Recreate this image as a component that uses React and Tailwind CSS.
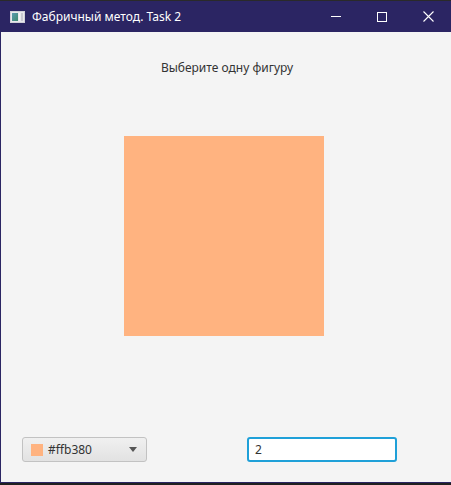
import React, { useState } from 'react';

const App = () => {
  const [value, setValue] = useState('2');

  return (
    <div className="w-[451px] h-[485px] bg-[#202020] flex flex-col overflow-hidden" style={{ fontFamily: '"Noto Sans", "Open Sans", sans-serif' }}>
      <div className="h-px bg-[#2a2a2a]" />
      {/* Title bar */}
      <div className="h-[31px] bg-[#2b2563] flex items-center text-white">
        <div className="ml-[10px] w-[15px] h-[12px] bg-[#e8e8ec] border border-[#d0d0d8] flex p-[1px] gap-[1px]">
          <div className="w-[6px] bg-gradient-to-br from-[#5a9ab0] to-[#3f8a6e]" />
          <div className="flex-1 bg-[#f4f4f6]" />
          <div className="w-[2px] bg-[#c8c8d0]" />
        </div>
        <span className="ml-[7px] text-[12px] leading-none">Фабричный метод. Task 2</span>
        <div className="ml-auto flex items-center h-full">
          <div className="w-[46px] h-full flex items-center justify-center">
            <div className="w-[10px] h-px bg-white" />
          </div>
          <div className="w-[46px] h-full flex items-center justify-center">
            <div className="w-[10px] h-[10px] border border-white" />
          </div>
          <div className="w-[46px] h-full flex items-center justify-center">
            <svg width="11" height="11" viewBox="0 0 11 11">
              <path d="M0.5 0.5L10.5 10.5M10.5 0.5L0.5 10.5" stroke="white" strokeWidth="1.1" />
            </svg>
          </div>
        </div>
      </div>
      {/* Content */}
      <div className="flex-1 flex border-l border-[#2b2563] overflow-hidden">
        <div className="flex-1 bg-[#f4f4f4] flex flex-col">
          <p className="mt-[28px] ml-[2px] text-center text-[12px] text-[#333333] leading-[16px]">Выберите одну фигуру</p>
          <div className="mt-[60px] ml-[123px] w-[200px] h-[200px] bg-[#ffb380]" />
          <div className="mt-[101px] flex items-center">
            <button className="ml-[21px] w-[125px] h-[25px] rounded-[3px] border border-[#c2c2c2] bg-gradient-to-b from-[#f0f0f0] to-[#e2e2e2] flex items-center px-[8px]">
              <span className="w-[12px] h-[12px] bg-[#ffb380]" />
              <span className="ml-[5px] text-[12px] text-[#333333]">#ffb380</span>
              <svg className="ml-auto mr-[1px]" width="8" height="5" viewBox="0 0 8 5">
                <path d="M0 0H8L4 5Z" fill="#555555" />
              </svg>
            </button>
            <input
              value={value}
              onChange={(e) => setValue(e.target.value)}
              className="ml-[100px] w-[150px] h-[25px] rounded-[3px] border-2 border-[#1fa0d8] bg-white px-[6px] text-[12px] text-[#333333] outline-none"
            />
          </div>
        </div>
      </div>
      <div className="h-px bg-[#2b2563]" />
      <div className="h-[2px] bg-[#202020]" />
    </div>
  );
};

export default App;
